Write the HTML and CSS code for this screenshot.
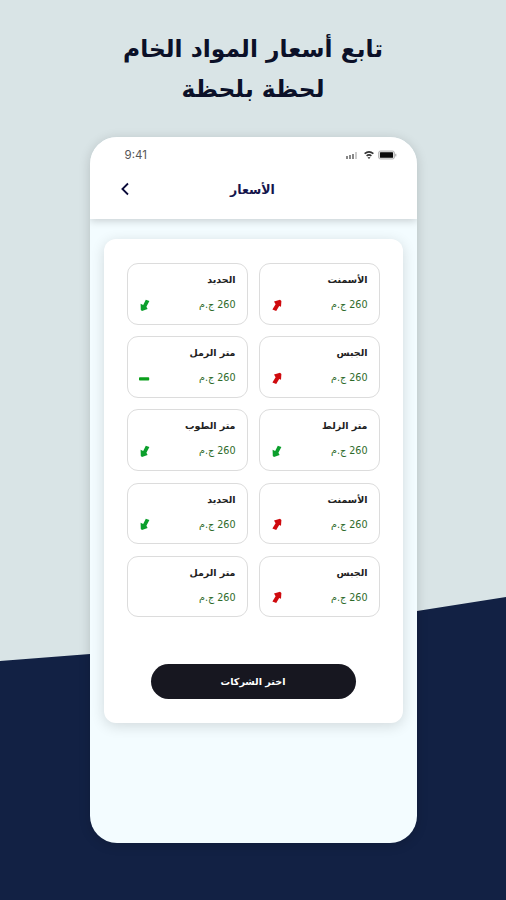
FILE: index.html
```
<!DOCTYPE html>
<html lang="ar" dir="rtl">
<head>
  <meta charset="UTF-8" />
  <meta name="viewport" content="width=device-width, initial-scale=1.0"/>
  <title>الأسعار</title>
  <link rel="stylesheet" href="styles.css">
</head>
<body>
  <h1>تابع أسعار المواد الخام<br>لحظة بلحظة</h1>

  <div class="phone">
    <div class="top">
      <div class="status" dir="ltr">
        <span class="time">9:41</span>
        <svg class="status-icons" width="53" height="12" viewBox="0 0 53 12">
          <g fill="#888">
            <rect x="1" y="7" width="2" height="3"/>
            <rect x="4" y="6" width="2" height="4"/>
            <rect x="7" y="5" width="2" height="5"/>
            <rect x="10" y="3" width="2" height="7" fill="#ccc"/>
          </g>
          <g fill="none" stroke="#333" stroke-width="1.6">
            <path d="M19.6 4.6Q24 1.2 28.4 4.6"/>
            <path d="M21.6 6.8Q24 4.8 26.4 6.8"/>
          </g>
          <path d="M22.5 8.2h3L24 10z" fill="#222"/>
          <rect x="33.5" y="2" width="16" height="8" rx="2" fill="#ddd" stroke="#bbb"/>
          <rect x="35" y="3.2" width="13" height="5.6" rx=".6" fill="#0a0a0a"/>
          <rect x="50" y="4.8" width="1.4" height="2.6" fill="#bbb"/>
        </svg>
      </div>
      <div class="nav">
        <h2>الأسعار</h2>
        <svg class="back" width="10" height="14" viewBox="0 0 10 14"><path d="M8 1.5L2.4 7L8 12.5" fill="none" stroke="#0b0b3a" stroke-width="1.8"/></svg>
      </div>
    </div>

    <div class="card">
      <div class="prices" id="prices"></div>
      <button>اختر الشركات</button>
    </div>
  </div>

  <script>
    const prices = [
      { name: "الأسمنت", trend: "up" },
      { name: "الحديد", trend: "down" },
      { name: "الجبس", trend: "up" },
      { name: "متر الرمل", trend: "same" },
      { name: "متر الزلط", trend: "down" },
      { name: "متر الطوب", trend: "down" },
      { name: "الأسمنت", trend: "up" },
      { name: "الحديد", trend: "down" },
      { name: "الجبس", trend: "up" },
      { name: "متر الرمل", trend: "" }
    ];

    const icons = {
      up: '<path fill="#cf0a0e" d="M3 2.4L9 .8L10.4 2L10 7.8L8.2 7L5.2 12L1.4 10.4L4.6 5.2z"/>',
      down: '<path fill="#0b9f2c" d="M10.4 2L6.8 .8L4.2 6L1.6 4.8L1.8 11L3 12L8.6 10L7.4 7.8z"/>',
      same: '<rect x="0" y="5.2" width="10.2" height="3.4" rx=".8" fill="#0b9f1c"/>'
    };

    const list = document.getElementById("prices");
    prices.forEach(item => {
      const div = document.createElement("div");
      div.className = "item";
      div.innerHTML = `
        <h4>${item.name}</h4>
        <div class="row">
          <p>260 ج.م</p>
          <svg width="12" height="13" viewBox="0 0 12 13">${icons[item.trend] || ""}</svg>
        </div>
      `;
      list.appendChild(div);
    });
  </script>
</body>
</html>
```
FILE: styles.css
```
* {
  box-sizing: border-box;
}
body {
  margin: 0;
  height: 900px;
  padding-top: 29px;
  overflow: hidden;
  font-family: "DejaVu Sans", sans-serif;
  background-color: #d9e4e6;
  position: relative;
}
/* dark slanted area at the bottom */
body::before {
  content: "";
  position: absolute;
  inset: 0;
  background-color: #122144;
  clip-path: polygon(0 661px, 90px 654px, 417px 611px, 100% 597px, 100% 100%, 0 100%);
}
h1 {
  margin: 0;
  height: 108px;
  text-align: center;
  color: #0b1028;
  font-size: 23.4px;
  line-height: 40px;
}
.phone {
  position: relative;
  width: 327px;
  height: 706px;
  margin: 0 auto;
  border-radius: 27px;
  background-color: #f3fcff;
  box-shadow: 0 2px 12px rgba(0, 0, 0, 0.16);
  overflow: hidden;
}
.top {
  height: 82px;
  padding: 11px 19px 0 35px;
  background-color: #fff;
  box-shadow: 0 2px 8px rgba(0, 0, 0, 0.18);
}
.status {
  display: flex;
  justify-content: space-between;
  align-items: center;
  height: 14px;
}
.time {
  font-family: Inter, sans-serif;
  font-size: 11.5px;
  color: #555;
}
.nav {
  display: flex;
  align-items: center;
  height: 54px;
}
.back {
  margin-left: -5px;
}
h2 {
  flex: 1;
  margin: 0;
  padding-right: 22px;
  text-align: center;
  font-size: 12.5px;
  color: #15154b;
}
.card {
  width: 299px;
  height: 484px;
  margin: 19.5px auto 0;
  padding: 24.5px 23px 0;
  border-radius: 12px;
  background-color: #fff;
  box-shadow: 0 3px 14px rgba(0, 0, 0, 0.14);
}
.prices {
  display: grid;
  grid-template-columns: 1fr 1fr;
  gap: 11.7px 11px;
}
.item {
  height: 61.5px;
  padding: 7px 11px 0;
  border: 1px solid #dcdcdc;
  border-radius: 11px;
}
h4 {
  margin: 0;
  font-size: 9.5px;
  line-height: 18px;
  color: #222;
}
.row {
  display: flex;
  justify-content: space-between;
  align-items: center;
  margin-top: 7px;
}
p {
  margin: 0;
  font-size: 9.6px;
  line-height: 18px;
  color: #2e6b2a;
}
button {
  display: block;
  width: 205px;
  height: 35px;
  margin: 46.5px auto 0;
  border: none;
  border-radius: 18px;
  background-color: #171720;
  color: #fff;
  font-family: "DejaVu Sans", sans-serif;
  font-size: 9.6px;
  font-weight: bold;
}
```
